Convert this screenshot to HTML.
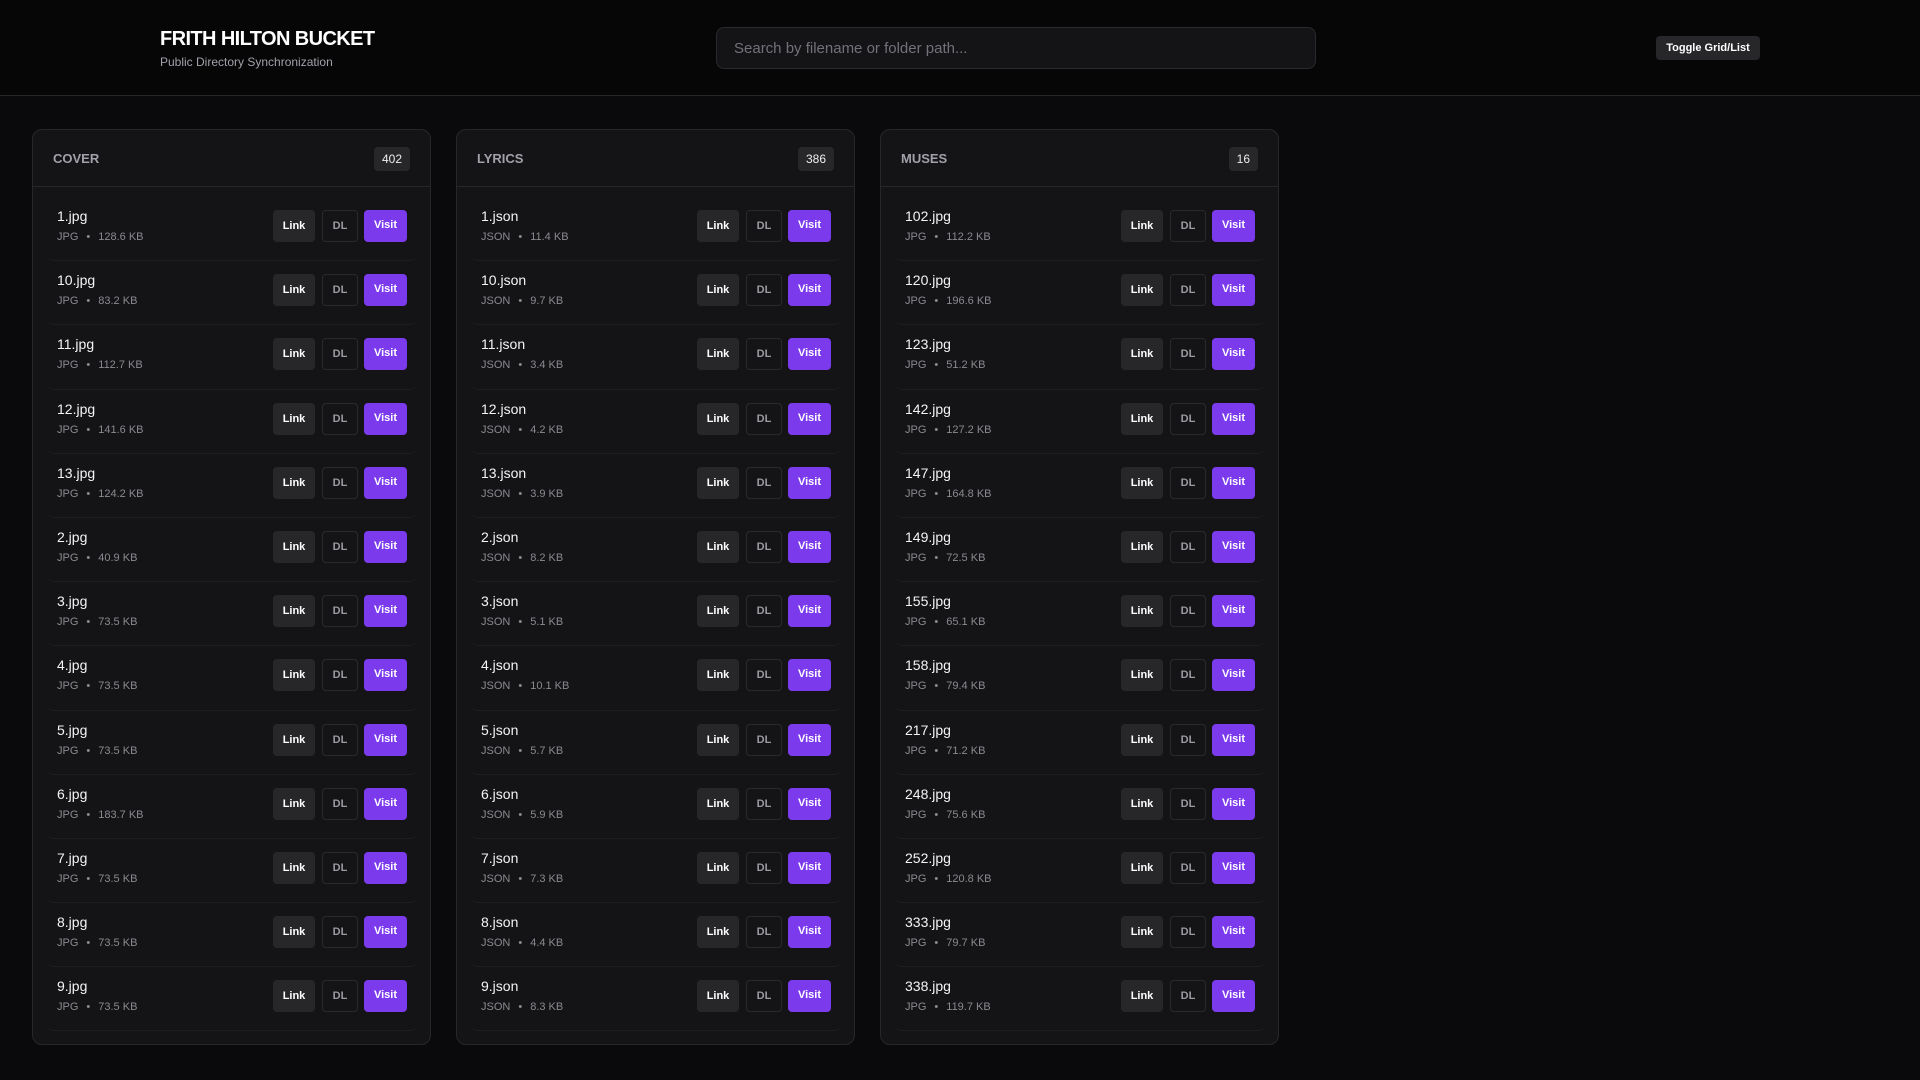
<!DOCTYPE html>
<html><head><meta charset="utf-8"><style>
*{box-sizing:border-box;margin:0;padding:0}
body{width:1920px;height:1080px;background:#0a0a0c;font-family:"Liberation Sans",sans-serif;color:#eee;overflow:hidden;position:relative}
header{height:96px;background:#060607;border-bottom:1px solid #27272a;position:relative}
.t{position:absolute;left:160px;top:28px;font-size:20px;font-weight:bold;letter-spacing:-0.6px;color:#fff}
.s{position:absolute;left:160px;top:55px;font-size:12px;color:#a1a1aa}
.search{position:absolute;left:716px;top:27px;width:600px;height:42px;border:1px solid #2a2a2e;border-radius:8px;background:#141417;color:#71717a;font-size:15px;padding:12px 17px}
.tog{position:absolute;left:1656px;top:36px;width:104px;height:24px;background:#27272a;border-radius:4px;font-size:11px;font-weight:bold;color:#fff;text-align:center;line-height:24px}
.card{position:absolute;top:129px;width:399px;height:916px;background:#141416;border:1px solid #27272a;border-radius:10px;overflow:hidden}
.ch{height:57px;border-bottom:1px solid #27272a;position:relative}
.ch b{position:absolute;left:20px;top:21px;font-size:13px;color:#a1a1aa}
.badge{position:absolute;right:20px;top:17px;height:24px;padding:0 8px;background:#27272a;border-radius:4px;font-size:12px;line-height:24px;color:#eee}
.rows{padding:10px 12px 0 13px}
.row{height:64.2px;border-bottom:1px solid #1e1e21;border-radius:8px;position:relative}
.n{position:absolute;left:11px;top:11px;font-size:14px;color:#f4f4f5}
.m{position:absolute;left:11px;top:34px;font-size:11px;color:#8a8a90}
.m i{font-style:normal;margin:0 8px}
.b{position:absolute;top:13px;height:32px;border-radius:4px;font-size:11px;font-weight:bold;text-align:center;line-height:32px}
.l{left:227px;width:42px;background:#27272a;color:#fff}
.d{left:276px;width:36px;border:1px solid #2a2a2e;color:#9a9aa0;line-height:30px}
.v{left:318px;width:43px;background:#7c3aed;color:#fff;line-height:30px}
</style></head><body>
<header><div class="t">FRITH HILTON BUCKET</div><div class="s">Public Directory Synchronization</div>
<div class="search">Search by filename or folder path...</div><div class="tog">Toggle Grid/List</div></header>
<div id="c"></div>
<script>
const cols=[["COVER","402",32,"JPG",[["1.jpg","128.6"],["10.jpg","83.2"],["11.jpg","112.7"],["12.jpg","141.6"],["13.jpg","124.2"],["2.jpg","40.9"],["3.jpg","73.5"],["4.jpg","73.5"],["5.jpg","73.5"],["6.jpg","183.7"],["7.jpg","73.5"],["8.jpg","73.5"],["9.jpg","73.5"]]],
["LYRICS","386",456,"JSON",[["1.json","11.4"],["10.json","9.7"],["11.json","3.4"],["12.json","4.2"],["13.json","3.9"],["2.json","8.2"],["3.json","5.1"],["4.json","10.1"],["5.json","5.7"],["6.json","5.9"],["7.json","7.3"],["8.json","4.4"],["9.json","8.3"]]],
["MUSES","16",880,"JPG",[["102.jpg","112.2"],["120.jpg","196.6"],["123.jpg","51.2"],["142.jpg","127.2"],["147.jpg","164.8"],["149.jpg","72.5"],["155.jpg","65.1"],["158.jpg","79.4"],["217.jpg","71.2"],["248.jpg","75.6"],["252.jpg","120.8"],["333.jpg","79.7"],["338.jpg","119.7"]]]];
let h="";
for(const [t,n,x,ty,rs] of cols){
h+=`<div class="card" style="left:${x}px"><div class="ch"><b>${t}</b><span class="badge">${n}</span></div><div class="rows">`;
for(const [f,s] of rs)h+=`<div class="row"><div class="n">${f}</div><div class="m">${ty}<i>•</i>${s} KB</div><div class="b l">Link</div><div class="b d">DL</div><div class="b v">Visit</div></div>`;
h+=`</div></div>`;}
document.getElementById("c").innerHTML=h;
</script>
</body></html>
